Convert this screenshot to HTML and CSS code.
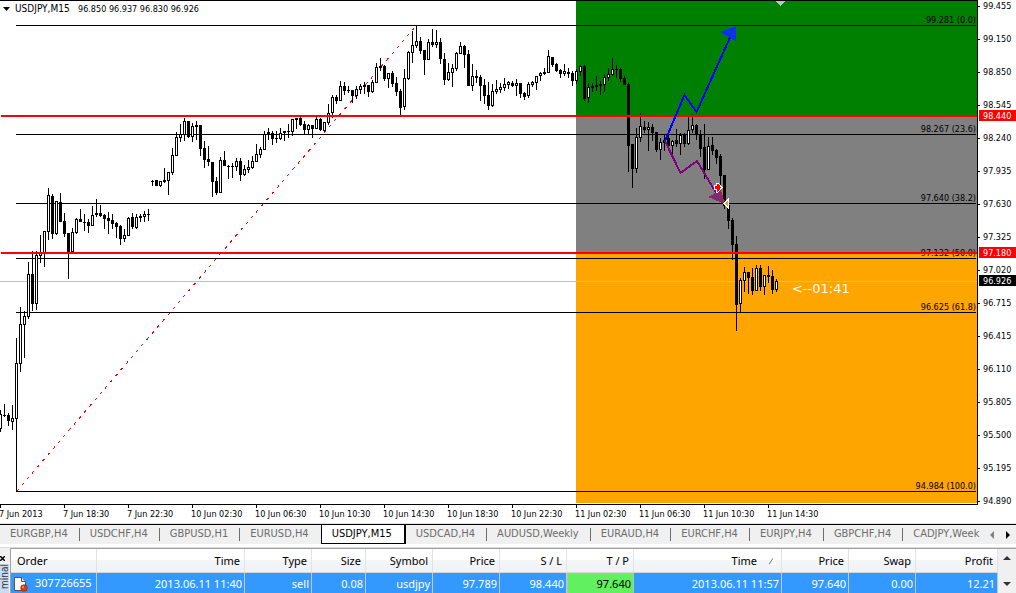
FILE: index.html
```html
<!DOCTYPE html>
<html lang="en">
<head>
<meta charset="utf-8">
<title>USDJPY,M15</title>
<link rel="stylesheet" href="styles.css">
</head>
<body>
<main class="terminal">
  <svg class="chart" viewBox="0 0 1016 523" role="img" aria-label="USDJPY M15 candlestick chart">
    <g class="crisp">
      <rect class="zone-green" x="576" y="1" width="401" height="115"/>
      <rect class="zone-gray" x="576" y="116" width="401" height="137"/>
      <rect class="zone-orange" x="576" y="253" width="401" height="250"/>
      <rect class="bid" x="0" y="281" width="978" height="1"/>
      <g id="levels"></g>
      <path class="trend" d="M16.5 491.5L415.5 26.5"/>
      <g id="candles"></g>
    </g>
    <g id="level-labels" class="label end"></g>
    <g class="crisp">
      <rect class="red" x="1" y="115" width="976" height="2"/>
      <rect class="red" x="1" y="252" width="976" height="2"/>
      <rect x="0" y="0" width="978" height="1"/>
      <rect x="977" y="0" width="1" height="505"/>
      <rect x="0" y="504" width="978" height="1"/>
      <path class="shift" d="M776 1h9l-4.500 5z"/>
      <path class="up" d="M665 141L684.500 95L696.500 112L732 33"/>
      <path class="up-head" d="M720 32L736 26V41z"/>
      <path class="down" d="M665 141L680.500 173L697 161L721 201"/>
      <path class="down-head" d="M708 197L721 190L725 204z"/>
      <path class="trade" d="M718.500 188L725.500 203"/>
      <path class="sell" d="M714.500 185.500h2v-2.500h1.500l4 4.500l-4 4.500h-1.500v-2.500h-2z"/>
      <path class="close-mark" d="M728.500 199v9l-4.500-4.500z"/>
    </g>
    <path d="M3 7h7l-3.500 4z"/>
    <text class="symbol" x="15" y="12">USDJPY,M15</text>
    <text class="label" x="78" y="12">96.850 96.937 96.830 96.926</text>
    <text class="timer" x="792" y="293">&lt;--01:41</text>
    <g id="prices" class="label"></g>
    <g class="label inverse">
      <rect class="red" x="979" y="110" width="37" height="11"/>
      <rect class="red" x="979" y="247" width="37" height="11"/>
      <rect x="979" y="275" width="37" height="11"/>
      <text x="983" y="119">98.440</text>
      <text x="983" y="256">97.180</text>
      <text x="983" y="284">96.926</text>
    </g>
    <g id="times" class="label"></g>
  </svg>

  <nav class="tabs" aria-label="Charts">
    <div class="tab-list">
      <button class="tab">EURGBP,H4</button>
      <button class="tab">USDCHF,H4</button>
      <button class="tab">GBPUSD,H1</button>
      <button class="tab">EURUSD,H4</button>
      <button class="tab active">USDJPY,M15</button>
      <button class="tab">USDCAD,H4</button>
      <button class="tab">AUDUSD,Weekly</button>
      <button class="tab">EURAUD,H4</button>
      <button class="tab">EURCHF,H4</button>
      <button class="tab">EURJPY,H4</button>
      <button class="tab">GBPCHF,H4</button>
      <button class="tab">CADJPY,Week</button>
    </div>
    <button class="arrow" aria-label="Scroll left"><svg width="4" height="8" viewBox="0 0 4 8"><path fill="#808080" d="M4 0v8L0 4z"/></svg></button>
    <button class="arrow" aria-label="Scroll right"><svg width="4" height="8" viewBox="0 0 4 8"><path d="M0 0v8l4-4z"/></svg></button>
  </nav>

  <section class="orders" aria-label="Terminal">
    <div class="side">
      <button class="close" aria-label="Close"><svg width="5" height="5" viewBox="0 0 5 5"><path d="M0 0L5 5M5 0L0 5" stroke="#000" stroke-width="1.500"/></svg></button>
      <div class="side-title"><span>minal</span></div>
    </div>
    <table class="grid">
      <colgroup>
        <col class="c-order"><col class="c-time"><col class="c-std"><col class="c-size"><col class="c-std"><col class="c-std"><col class="c-std"><col class="c-std"><col class="c-time"><col class="c-std"><col class="c-std"><col class="c-profit">
      </colgroup>
      <thead>
        <tr><th class="first">Order</th><th>Time</th><th>Type</th><th>Size</th><th>Symbol</th><th>Price</th><th>S / L</th><th>T / P</th><th class="sorted">Time<svg class="sort" width="7" height="7" viewBox="0 0 7 7"><path d="M0 6.500L4 0" stroke="#777" fill="none"/><path d="M4 0L6.500 6.500H1" stroke="#fff" fill="none"/></svg></th><th>Price</th><th>Swap</th><th>Profit</th></tr>
      </thead>
      <tbody>
        <tr><td class="first"><svg class="doc" width="14" height="15" viewBox="0 0 14 15"><path d="M.5.5h7l4 4v9H.5z" fill="#fafafa" stroke="#555"/><path d="M7.500.5v4h4" fill="#ddd" stroke="#555"/><circle cx="10" cy="11" r="3.300" fill="#e03c0c" stroke="#8c2400" stroke-width=".6"/><circle cx="9" cy="10" r="1" fill="#ff9a70"/></svg>307726655</td><td>2013.06.11 11:40</td><td>sell</td><td>0.08</td><td>usdjpy</td><td>97.789</td><td>98.440</td><td class="hit">97.640</td><td>2013.06.11 11:57</td><td>97.640</td><td>0.00</td><td>12.21</td></tr>
      </tbody>
    </table>
    <div class="scroll">
      <button aria-label="Scroll up"><svg width="8" height="4" viewBox="0 0 8 4"><path fill="#333" d="M0 4L4 0L8 4z"/></svg></button>
      <button aria-label="Scroll down"><svg width="8" height="4" viewBox="0 0 8 4"><path fill="#333" d="M0 0L4 4L8 0z"/></svg></button>
    </div>
  </section>
</main>
<script src="chart.js"></script>
</body>
</html>
```
FILE: styles.css
```css
* { box-sizing: border-box; }
body {
  margin: 0;
  background: #fff;
  color: #000;
  font-family: "DejaVu Sans Condensed", "DejaVu Sans", sans-serif;
  overflow: hidden;
}
button {
  margin: 0;
  padding: 0;
  border: 0;
  background: none;
  font: inherit;
  color: inherit;
}
.terminal { display: flex; flex-direction: column; height: 100vh; }

.chart { display: block; width: 100%; flex: none; border-bottom: 1px solid #e3e3e3; }
.crisp { shape-rendering: crispEdges; }
.label { font-size: 9px; }
.symbol { font-size: 10px; }
.end { text-anchor: end; }
.inverse text { fill: #fff; }
.timer { font-family: "DejaVu Sans", sans-serif; font-size: 13px; fill: #fff; }
.zone-green { fill: #008000; }
.zone-gray { fill: #808080; }
.zone-orange { fill: #ffa500; }
.bid, .shift { fill: #c0c0c0; }
.red { fill: #f00; }
.hollow { fill: #fff; stroke: #000; }
.trend { fill: none; stroke: #f00; stroke-dasharray: 3 5; }
.up { fill: none; stroke: #00f; stroke-width: 2; }
.up-head { fill: #1030f0; }
.down { fill: none; stroke: #800080; stroke-width: 2; }
.down-head { fill: #802a70; }
.trade { stroke: #f00; stroke-dasharray: 2 2; }
.sell { fill: #f00; stroke: #fff; }
.close-mark { fill: #daa520; stroke: #fff; }

.tabs {
  display: flex;
  flex: none;
  height: 20px;
  border-top: 1px solid #000;
  background: #f0f0f0;
  font-size: 11px;
  line-height: 16px;
  color: #6d6d6d;
}
.tab-list { display: flex; flex: 1; min-width: 0; overflow: hidden; }
.tab { position: relative; flex: none; padding: 1px 12px 2px 10px; white-space: nowrap; }
.tab::after {
  content: "";
  position: absolute;
  right: 0;
  top: 3px;
  height: 13px;
  border-right: 1px solid #6d6d6d;
}
.tab.active {
  padding: 1px 12px 1px 10px;
  border: solid #000;
  border-width: 0 2px 1px 1px;
  background: #fff;
  color: #000;
}
.tab.active::after, .tab:has(+ .active)::after { display: none; }
.arrow { flex: none; width: 16px; display: grid; place-items: center; }
.arrow svg { display: block; }

.orders {
  display: flex;
  flex: 1;
  min-height: 0;
  overflow: hidden;
  margin-top: 3px;
  border-top: 1px solid #dcdcdc;
  background: #f0f0f0;
  font-family: "Noto Sans", "Open Sans", sans-serif;
  font-size: 11px;
}
.side { flex: none; width: 11px; border-right: 1px solid #a0a0a0; overflow: hidden; }
.close { display: block; width: 5px; height: 16px; }
.side-title {
  height: 30px;
  width: 9px;
  background: #c9dcef;
  color: #334;
  font-family: "DejaVu Sans Condensed", "DejaVu Sans", sans-serif;
  font-size: 10px;
  line-height: 9px;
}
.side-title span { writing-mode: vertical-rl; transform: rotate(180deg); display: block; width: 9px; }
.grid {
  flex: 1;
  min-width: 0;
  border-top: 1px solid #a0a0a0;
  border-collapse: separate;
  border-spacing: 0;
  table-layout: fixed;
  text-align: right;
  white-space: nowrap;
  background: #fff;
  align-self: flex-start;
}
.c-order { width: 86px; }
.c-time { width: 148px; }
.c-std { width: 67px; }
.c-size { width: 54px; }
.c-profit { width: 82px; }
.grid th {
  height: 24px;
  padding: 0 4px 0 6px;
  border-right: 1px solid #e2e3e6;
  border-bottom: 1px solid #d5d5d5;
  background: linear-gradient(#fff 45%, #f4f5f7 50%, #f1f2f4);
  font-weight: 400;
}
.grid td {
  height: 21px;
  padding: 0 2px 0 3px;
  border-right: 1px solid #c0c8d0;
  background: #39f;
  color: #fff;
}
.grid .first { text-align: left; }
.grid td.hit { background: #60f060; color: #000; border: 1px solid #a8c8a8; }
.grid th.sorted { padding-right: 5px; }
.sort { margin-left: 12px; }
.doc { margin-right: 7px; vertical-align: middle; }
.scroll {
  flex: none;
  width: 18px;
  display: flex;
  flex-direction: column;
  align-items: center;
  border-top: 1px solid #a0a0a0;
}
.scroll button { display: grid; place-items: center; width: 16px; height: 18px; }
.scroll button + button { margin-top: 8px; }
```
FILE: chart.js
```js
const NS = "http://www.w3.org/2000/svg";

function add(parent, name, attrs, text) {
  const el = document.createElementNS(NS, name);
  for (const key in attrs) el.setAttribute(key, attrs[key]);
  if (text) el.textContent = text;
  parent.appendChild(el);
}

// One candle per 4 units: high, body top, body bottom, low; h = hollow, f = filled.
const data = `
410 414 428 431 h|404 415 415 416 f|413 415 420 425 f|405 418 421 429 h|338 363 418 491 h
307 324 363 371 h|311 316 324 357 h|262 274 316 318 h|251 274 303 310 f|251 255 303 309 h
235 253 255 262 h|231 231 252 266 h|188 195 231 239 h|194 196 233 238 f|201 201 233 234 h
193 202 221 221 f|213 221 233 236 f|233 233 252 278 f|228 232 251 252 h|218 219 232 233 h
209 219 221 221 f|214 222 222 230 f|219 222 225 232 f|206 215 225 225 h|199 213 214 216 f
205 213 215 216 f|214 215 218 228 f|212 218 220 233 f|214 220 223 228 f|222 223 226 237 f
225 226 238 244 f|229 235 238 241 h|217 218 235 235 h|213 217 226 228 f|214 217 227 228 h
214 216 217 221 f|211 214 216 221 h|209 214 214 220 f|180 181 181 185 f|180 180 185 185 f
181 181 185 186 h|168 180 181 182 f|172 172 180 194 h|148 155 172 174 h|132 137 155 155 h
124 134 137 141 h|118 121 134 140 h|121 121 136 137 f|123 126 136 141 h|121 125 126 139 f
125 125 148 155 f|141 148 159 167 f|146 159 161 165 f|162 162 181 196 f|177 181 192 194 f
157 160 192 192 h|151 160 165 165 f|165 166 166 178 f|163 166 166 177 f|158 161 166 170 h
158 161 174 180 f|165 169 174 175 h|160 167 169 172 h|156 161 167 168 h|144 154 161 161 h
147 149 154 157 h|131 134 149 149 h|128 132 133 139 f|131 133 138 144 f|131 138 138 142 f
128 133 138 139 h|131 131 132 140 f|124 131 131 137 f|119 119 131 135 h|118 118 119 128 f
117 118 124 125 f|121 124 129 134 f|124 125 129 133 h|125 125 128 137 f|117 119 128 128 h
118 119 129 130 f|122 122 130 131 h|104 113 122 124 h|95 97 112 117 h|95 97 100 103 f
81 86 100 100 h|82 86 90 94 f|86 90 90 92 f|90 90 95 102 f|86 89 95 98 h
84 86 89 93 h|82 85 86 93 f|85 85 91 96 f|80 82 91 92 h|63 67 82 82 h
58 66 67 70 f|65 66 78 80 f|73 73 78 87 h|71 73 83 86 f|77 83 91 95 f
89 91 107 115 f|69 78 106 109 h|51 52 78 79 h|31 45 52 62 h|26 41 45 47 h
37 41 50 53 f|50 50 59 74 f|39 42 59 59 h|29 42 44 46 f|30 42 44 47 h
38 42 58 63 f|53 59 79 84 f|63 72 79 80 h|64 68 72 86 h|52 53 68 70 h
42 46 53 53 h|45 46 54 67 f|50 54 85 85 f|64 76 85 90 h|70 76 77 82 f
75 77 85 100 f|79 85 95 103 f|82 95 105 109 f|84 91 105 106 h|80 89 91 93 h
83 87 89 92 h|78 84 87 90 h|81 82 84 88 h|81 83 85 86 f|79 83 85 95 h
83 83 93 97 f|92 93 96 99 f|82 84 95 97 h|81 82 84 86 h|76 76 82 89 h
72 73 75 80 h|68 72 73 74 f|50 56 72 72 h|57 57 64 66 f|63 64 70 71 f
69 70 73 77 f|64 71 73 75 h|68 72 73 77 f|71 73 80 85 f|69 71 80 83 h
65 66 71 75 h|65 66 98 100 f|83 87 97 102 h|83 86 87 91 f|76 85 86 90 f
81 84 85 94 f|74 77 84 91 h|68 74 77 80 h|58 69 74 75 h|65 69 69 77 f
68 69 78 81 f|76 78 84 84 f|83 84 145 171 f|144 144 168 187 f|128 137 168 172 h
113 126 137 141 h|121 127 129 132 f|122 127 129 150 h|124 127 132 140 f|132 132 149 151 f
138 142 149 159 h|135 140 142 150 h|135 138 145 147 f|140 141 145 155 h|129 140 143 146 f
133 135 143 154 h|133 134 143 146 f|117 130 143 144 h|114 125 129 132 h|124 125 134 139 f
130 134 148 156 f|124 147 169 178 f|137 146 169 169 h|137 145 150 154 f|149 150 157 163 f
154 156 175 190 f|175 175 205 208 f|204 205 220 228 f|218 220 244 259 f|236 244 304 330 f
278 280 303 311 h|267 272 280 291 h|272 272 277 293 f|268 277 290 294 f|265 268 290 290 h
265 268 286 290 f|275 275 286 294 h|266 275 276 282 f|270 276 289 293 f|279 281 289 291 h`;

const candles = document.getElementById("candles");
data.trim().split(/[|\n]/).forEach((row, i) => {
  const [high, top, bottom, low, kind] = row.split(" ");
  const x = i * 4;
  add(candles, "rect", { x, y: high, width: 1, height: low - high + 1 });
  if (kind === "h") {
    add(candles, "rect", { class: "hollow", x: x - 0.5, y: +top + 0.5, width: 2, height: bottom - top });
  } else {
    add(candles, "rect", { x: x - 1, y: top, width: 3, height: bottom - top + 1 });
  }
});

const levels = [
  [25, "99.281 (0.0)"], [134, "98.267 (23.6)"], [203, "97.640 (38.2)"],
  [258, "97.132 (50.0)"], [312, "96.625 (61.8)"], [491, "94.984 (100.0)"]
];
for (const [y, text] of levels) {
  add(document.getElementById("levels"), "rect", { x: 16, y, width: 960, height: 1 });
  add(document.getElementById("level-labels"), "text", { x: 976, y: y - 2 }, text);
}

const prices = document.getElementById("prices");
["99.455", "99.150", "98.850", "98.545", "98.240", "97.935", "97.630", "97.325", "97.020",
  "96.715", "96.415", "96.110", "95.805", "95.500", "95.195", "94.890"].forEach((text, i) => {
  add(prices, "rect", { x: 978, y: 6 + 33 * i, width: 2, height: 1 });
  add(prices, "text", { x: 983, y: 9 + 33 * i }, text);
});

const times = document.getElementById("times");
["7 Jun 2013", "7 Jun 18:30", "7 Jun 22:30", "10 Jun 02:30", "10 Jun 06:30", "10 Jun 10:30",
  "10 Jun 14:30", "10 Jun 18:30", "10 Jun 22:30", "11 Jun 02:30", "11 Jun 06:30",
  "11 Jun 10:30", "11 Jun 14:30"].forEach((text, i) => {
  add(times, "rect", { x: 64 * i, y: 505, width: 1, height: 3 });
  add(times, "text", { x: 64 * i - 1, y: 517 }, text);
});
```
